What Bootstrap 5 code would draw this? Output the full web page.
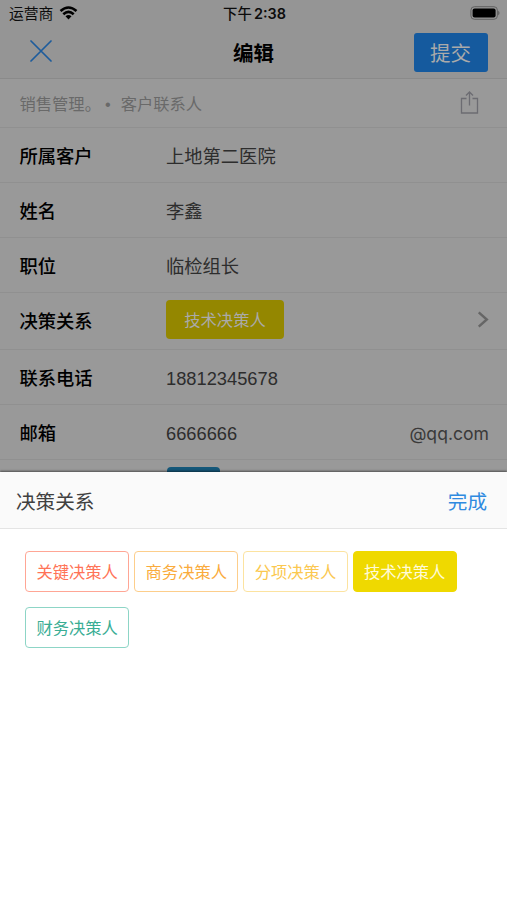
<!DOCTYPE html>
<html lang="zh-CN">
<head>
<meta charset="utf-8">
<meta name="viewport" content="width=device-width, initial-scale=1">
<title>编辑</title>
<link href="https://cdn.jsdelivr.net/npm/bootstrap@5.3.0/dist/css/bootstrap.min.css" rel="stylesheet">
<style>
body{font-family:"Liberation Sans","Noto Sans CJK SC",sans-serif;width:507px;height:900px;overflow:hidden;background:#fff;line-height:1.2}
.page-back{height:472px;background:#999;color:#000}
.top-zone{height:79px;background:#959595;border-bottom:1px solid #8a8a8a}
.status{height:27px;font-size:14.8px;padding:0 7px 1px 9px;font-family:Inter,"Noto Sans CJK SC",sans-serif;color:#0c0c0c}
.carrier{padding-top:3px}
.wifi{margin-left:6px}
.clock{font-weight:600;font-size:14.4px;word-spacing:-1.5px;padding-top:1px}
.clock-part{font-weight:500}
.title-bar{height:51px;padding:0 19px 0 30px}
.side{flex:1 1 0}
.title-start{width:203px}
.title-start svg{margin-bottom:4px}
.page-title{font-size:20.5px;font-weight:700;padding-top:3px}
.submit{width:74px;height:39px;background:#155a9e;color:#aaa;font-size:20.5px;border:0;border-radius:3px;padding:3px 1px 0 0}
.crumb{height:49px;padding:0 28px 0 19.5px;border-bottom:1px solid #909090;color:#696969;font-size:16.3px}
.crumb-text{padding-top:3px}
.dot{margin:0 10px 0 4px}
.line{height:55px;padding:3px 18px 0 19.5px;border-bottom:1px solid #909090;font-size:18.3px}
.line-tall{height:57px;padding-top:0}
.line-tall .label{padding-top:2px}
.label{width:146.5px;font-weight:500}
.val{color:#2d2d2d}
.suffix{font-family:Inter,sans-serif;font-size:17.6px;color:#3a3a3a}
.pill{width:118px;height:39px;margin-bottom:3px;padding-top:2px;border-radius:4px;background:#948700;color:#aaa;font-size:16.3px}
.stub{height:12px;padding:7px 0 0 166.5px;overflow:hidden}
.stub-btn{width:53px;height:30px;border-radius:4px;background:#15587a}
.sheet{height:428px;background:#fff;box-shadow:0 -1px 2px rgba(0,0,0,.5)}
.sheet-head{height:57px;padding:5px 20px 0 16px;background:#fafafa;border-bottom:1px solid #e4e4e4;font-size:19.6px;color:#404040}
.done{color:#2f8ae0}
.choices{padding:22px 25px;gap:15px 5px}
.choice{width:104.2px;height:41px;border:1.5px solid;border-radius:4px;font-size:16.3px;background:#fff;padding-top:3px}
.c-key{color:#ff7357;border-color:#ffa695}
.c-biz{color:#faab3c;border-color:#fdce8b}
.c-item{color:#fbc850;border-color:#fce3a0}
.c-fin{color:#39ad94;border-color:#8dd5c6}
.c-tech{color:#fffbd8;background:#efd900;border-color:#efd900}
</style>
<script src="https://cdn.jsdelivr.net/npm/bootstrap@5.3.0/dist/js/bootstrap.bundle.min.js"></script>
</head>
<body>
<div class="page-back overflow-hidden">
  <header class="top-zone">
    <div class="status d-flex align-items-center">
      <div class="side d-flex align-items-center"><span class="carrier">运营商</span>
        <svg class="wifi" width="19" height="14" viewBox="0 0 18 14" fill="none" stroke="#000" stroke-width="2.6"><path d="M1 5Q9-2 17 5M3.8 8.2Q9 3.5 14.2 8.2"/><path d="M6 10.3Q9 7.7 12 10.3L9 13.4Z" fill="#000" stroke="none"/></svg>
      </div>
      <div class="clock"><span class="clock-part">下午</span> 2:38</div>
      <div class="side d-flex justify-content-end">
        <svg width="30" height="14" viewBox="0 0 30 14"><rect x=".9" y=".7" width="26.5" height="12.6" rx="3.5" fill="none" stroke="#626262"/><rect x="2.6" y="2.4" width="23" height="9.2" rx="2" fill="#000"/><path d="M28.3 4.6Q30.6 7 28.3 9.4Z" fill="#555"/></svg>
      </div>
    </div>
    <div class="title-bar d-flex align-items-center">
      <div class="title-start"><svg class="d-block" width="22" height="22" viewBox="0 0 22 22" stroke="#1d5c9c" stroke-width="1.7" stroke-linecap="round"><path d="M1 1L21 21M21 1L1 21"/></svg></div>
      <div class="page-title flex-grow-1">编辑</div>
      <button class="submit">提交</button>
    </div>
  </header>
  <div class="crumb d-flex align-items-center justify-content-between">
    <span class="crumb-text">销售管理。<span class="dot">•</span>客户联系人</span>
    <svg width="19" height="24" viewBox="0 0 19 24" fill="none" stroke="#6c6c72" stroke-width="1.3"><path d="M6.5 7.5H1.5V22H17.5V7.5H12.5M9.5 14.5V1.5M6 4.5L9.5 1L13 4.5"/></svg>
  </div>
  <div class="line d-flex align-items-center"><div class="label">所属客户</div><div class="val">上地第二医院</div></div>
  <div class="line d-flex align-items-center"><div class="label">姓名</div><div class="val">李鑫</div></div>
  <div class="line d-flex align-items-center"><div class="label">职位</div><div class="val">临检组长</div></div>
  <div class="line line-tall d-flex align-items-center"><div class="label">决策关系</div>
    <div class="pill d-flex align-items-center justify-content-center">技术决策人</div>
    <svg class="ms-auto mb-1" width="12" height="17" viewBox="0 0 12 18" fill="none" stroke="#666" stroke-width="2.6"><path d="M1.5 1.5L10 9L1.5 16.5"/></svg>
  </div>
  <div class="line d-flex align-items-center"><div class="label">联系电话</div><div class="val">18812345678</div></div>
  <div class="line d-flex align-items-center"><div class="label">邮箱</div><div class="val">6666666</div><div class="suffix ms-auto">@qq.com</div></div>
  <div class="stub"><div class="stub-btn"></div></div>
</div>
<section class="sheet position-relative">
  <div class="sheet-head d-flex align-items-center justify-content-between"><span>决策关系</span><span class="done">完成</span></div>
  <div class="choices d-flex flex-wrap">
    <div class="choice c-key d-flex align-items-center justify-content-center">关键决策人</div>
    <div class="choice c-biz d-flex align-items-center justify-content-center">商务决策人</div>
    <div class="choice c-item d-flex align-items-center justify-content-center">分项决策人</div>
    <div class="choice c-tech d-flex align-items-center justify-content-center">技术决策人</div>
    <div class="choice c-fin d-flex align-items-center justify-content-center">财务决策人</div>
  </div>
</section>
</body>
</html>
